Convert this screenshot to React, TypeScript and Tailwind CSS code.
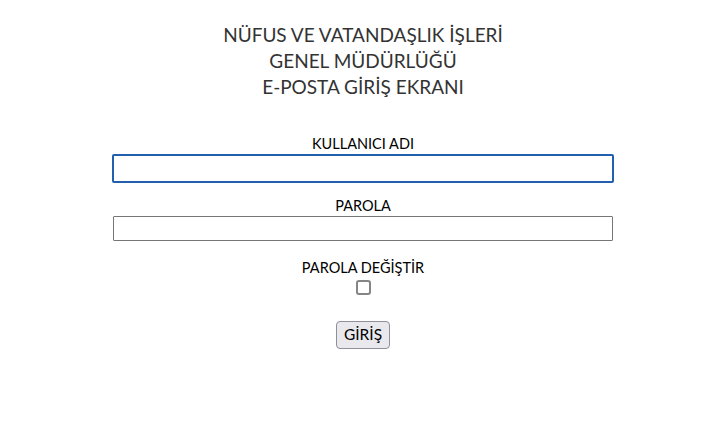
export default function App() {
  return (
    <div className="min-h-screen bg-white flex flex-col items-center pl-[5px] font-['Lato',sans-serif] text-black">
      <h1 className="mt-[22px] text-center text-[19px] leading-[26px] text-[#333] font-normal">
        NÜFUS VE VATANDAŞLIK İŞLERİ
        <br />
        GENEL MÜDÜRLÜĞÜ
        <br />
        E-POSTA GİRİŞ EKRANI
      </h1>

      <label htmlFor="user" className="mt-[34px] text-[14.5px] leading-[20px]">
        KULLANICI ADI
      </label>
      <input
        id="user"
        type="text"
        className="w-[502px] h-[29px] border-2 border-[#2260ad] rounded-[2px] outline-none px-1"
      />

      <label htmlFor="pass" className="mt-[13px] text-[14.5px] leading-[20px]">
        PAROLA
      </label>
      <input
        id="pass"
        type="password"
        className="w-[500px] h-[25px] border border-[#767676] rounded-[1px] outline-none px-1"
      />

      <label htmlFor="chg" className="mt-[17px] text-[14.5px] leading-[20px]">
        PAROLA DEĞİŞTİR
      </label>
      <input
        id="chg"
        type="checkbox"
        className="mt-[2px] appearance-none w-[15px] h-[15px] border-2 border-[#858585] rounded-[3px] bg-white"
      />

      <button className="mt-[26px] h-[28px] px-[7px] text-[15.5px] leading-none bg-[#e9e9ed] border border-[#8f8f9d] rounded-[4px]">
        GİRİŞ
      </button>
    </div>
  );
}
